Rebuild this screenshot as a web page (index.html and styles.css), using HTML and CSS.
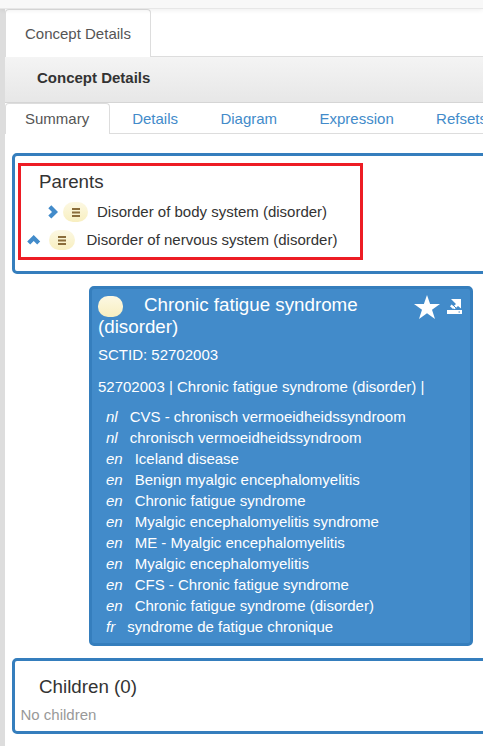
FILE: index.html
```
<!DOCTYPE html>
<html lang="en">
<head>
<meta charset="utf-8">
<title>Concept Details</title>
<link rel="stylesheet" href="styles.css">
</head>
<body>
<div class="navbar"></div>
<div class="shell">
  <main class="page">
    <div class="tabs tabs-outer"><span class="tab active">Concept Details</span></div>
    <header class="heading">Concept Details</header>
    <nav class="tabs tabs-inner">
      <a class="tab active">Summary</a><a class="tab">Details</a><a class="tab">Diagram</a><a class="tab">Expression</a><a class="tab">Refsets</a>
    </nav>
    <section class="panel parents">
      <div class="highlight"></div>
      <h4>Parents</h4>
      <div class="parent first">
        <svg class="chev" width="10" height="14" viewBox="0 0 10 14"><path d="M.3 3.200 3.300.2 10 6.900 3.300 13.600.3 10.600 4 6.900z"/></svg>
        <span class="badge"><svg width="8" height="9" viewBox="0 0 8 9"><path d="M0 0h8v2H0zM0 3.500h8v2H0zM0 7h8v2H0z"/></svg></span>
        <span class="name">Disorder of body system (disorder)</span>
      </div>
      <div class="parent second">
        <svg class="chev" width="14" height="10" viewBox="0 0 14 10"><path d="M.2 6.500 6.700 0l6.500 6.500-3 3L6.700 6l-3.500 3.500z"/></svg>
        <span class="badge"><svg width="8" height="9" viewBox="0 0 8 9"><path d="M0 0h8v2H0zM0 3.500h8v2H0zM0 7h8v2H0z"/></svg></span>
        <span class="name">Disorder of nervous system (disorder)</span>
      </div>
    </section>
    <section class="card">
      <div class="card-top">
        <h4><span class="badge plain"></span>Chronic fatigue syndrome (disorder)</h4>
        <svg class="star" width="26" height="24" viewBox="0 0 26 24"><path d="M13 0l3.100 9H26l-8 5.700L21 24l-8-5.700L5 24l3-9.300L0 9h9.900z"/></svg>
        <svg class="export" width="15" height="15" viewBox="0 0 15 15"><path d="M0 11h15v4H0zM4 0h10v9.500l-3-2.500-3.500 3.200-2-2L9 5z M3 7.200l1.700-1.700 3 3L6 10z"/><path class="cut" d="M4.800 4.800 9 9M11.500 13h1.500"/></svg>
      </div>
      <p class="sctid">SCTID: 52702003</p>
      <p class="expr">52702003 | Chronic fatigue syndrome (disorder) |</p>
      <ul>
        <li><em>nl</em>CVS - chronisch vermoeidheidssyndroom</li>
        <li><em>nl</em>chronisch vermoeidheidssyndroom</li>
        <li><em>en</em>Iceland disease</li>
        <li><em>en</em>Benign myalgic encephalomyelitis</li>
        <li><em>en</em>Chronic fatigue syndrome</li>
        <li><em>en</em>Myalgic encephalomyelitis syndrome</li>
        <li><em>en</em>ME - Myalgic encephalomyelitis</li>
        <li><em>en</em>Myalgic encephalomyelitis</li>
        <li><em>en</em>CFS - Chronic fatigue syndrome</li>
        <li><em>en</em>Chronic fatigue syndrome (disorder)</li>
        <li><em>fr</em>syndrome de fatigue chronique</li>
      </ul>
    </section>
    <section class="panel children">
      <h4>Children (0)</h4>
      <p>No children</p>
    </section>
  </main>
</div>
</body>
</html>
```
FILE: styles.css
```
* { box-sizing: border-box; }
body {
  margin: 0;
  height: 746px;
  overflow: hidden;
  background: #fff;
  color: #333;
  font: 15px/21px "Liberation Sans", Arial, sans-serif;
}
h4, p, ul { margin: 0; padding: 0; font-weight: 400; list-style: none; }
h4 { font-size: 18.75px; line-height: 22px; }
.navbar {
  position: relative;
  height: 9px;
  background: #f8f8f8;
  border-bottom: 1px solid #e7e7e7;
  box-shadow: 0 1px 5px rgba(0, 0, 0, .075);
}
.shell { height: 737px; border-left: 5px solid #ddd; overflow: hidden; }
.tabs { display: flex; border-bottom: 1px solid #ddd; white-space: nowrap; }
.tab { flex: none; color: #428bca; border: 1px solid transparent; border-bottom: 0; }
.tab.active {
  margin-bottom: -1px;
  background: #fff;
  color: #555;
  border-color: #ddd;
  border-radius: 4px 4px 0 0;
}
.tabs-outer { height: 48px; }
.tabs-outer .tab { width: 146px; height: 48px; padding: 13px 0 0 19px; }
.heading {
  height: 46px;
  padding: 10px 0 0 32px;
  border-bottom: 1px solid #d5d5d5;
  background: linear-gradient(#f4f4f4, #e7e7e7);
  font-weight: 700;
}
.tabs-inner { height: 31px; }
.tabs-inner .tab { height: 31px; padding: 4px 19.4px 0 19px; margin-right: 2px; }
.tabs-inner .tab.active { padding-right: 20px; }
.panel { width: 500px; margin-left: 7px; border: 3px solid #357ebd; border-radius: 5px; }
.parents { position: relative; height: 121px; margin-top: 19px; padding: 15px 0 0 24px; }
.highlight { position: absolute; left: 3px; top: 7px; width: 345px; height: 97px; border: 3px solid #ed1c24; }
.parent { display: flex; align-items: center; height: 28px; white-space: nowrap; }
.parent.first { margin-top: 5px; padding-left: 9px; }
.parent.second { margin-left: -12.500px; }
.name { padding-bottom: 1px; }
.chev { fill: #428bca; flex: none; }
.badge {
  display: flex;
  align-items: center;
  justify-content: center;
  flex: none;
  width: 25px;
  height: 20px;
  border-radius: 10px;
  background: linear-gradient(#fcf8e3, #f8efc0);
  fill: #8a6d3b;
}
.first .badge { margin: 0 9px 0 5px; }
.second .badge { width: 26px; margin: 0 12px 0 8px; }
.card {
  width: 384px;
  height: 360px;
  margin: 12px 0 0 84px;
  padding: 5px 5px 0 6px;
  border: 3px solid #357ebd;
  border-radius: 5px;
  background: #428bca;
  color: #fff;
}
.card-top { display: flex; height: 44px; fill: #fff; }
.card-top h4 { width: 300px; }
.badge.plain { display: inline-block; width: 25px; height: 21px; margin: 0 21px -6px 0; vertical-align: baseline; }
.star { margin: 1px 7px 0 16px; }
.export { margin-top: 5px; }
.cut { fill: none; stroke: #428bca; stroke-width: 1; }
.sctid { margin-top: 6px; }
.expr { margin-top: 11px; }
.card ul { margin: 9px 0 0 8px; }
.card em { margin-right: 12px; }
.children { height: 76px; margin-top: 12px; padding-top: 15px; }
.children h4 { padding-left: 24px; }
.children p { margin-top: 6px; padding-left: 5.500px; color: #999; }
```
